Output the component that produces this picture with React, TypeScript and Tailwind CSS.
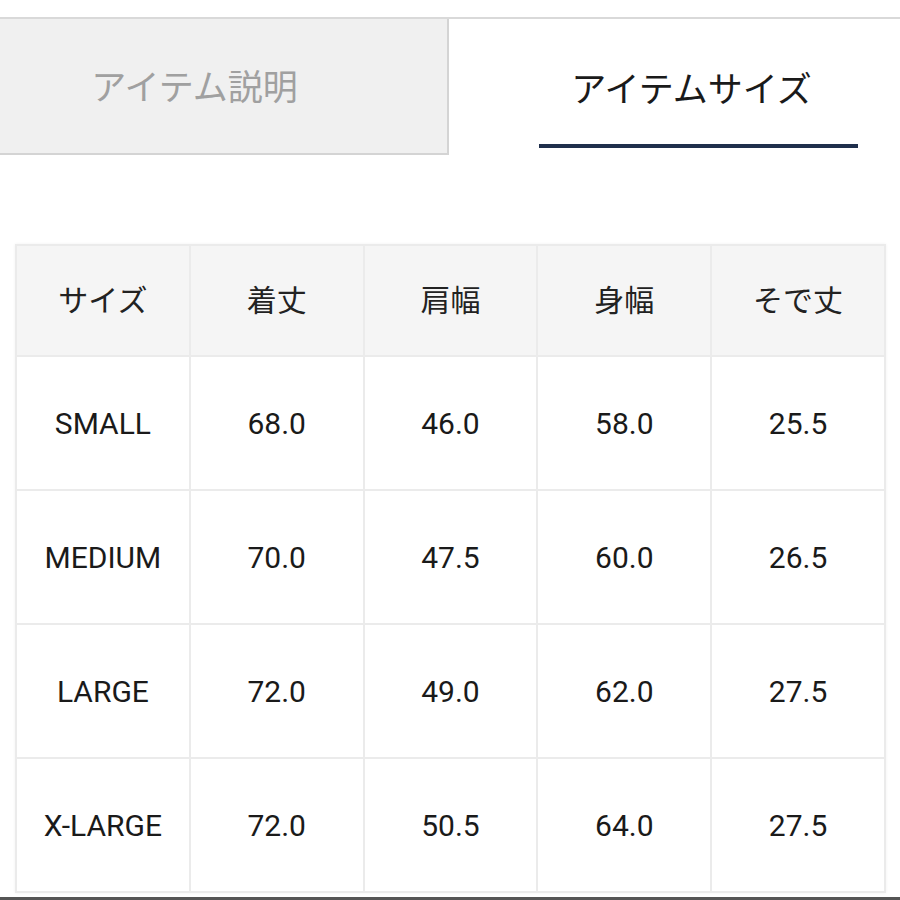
import React from 'react';

// Size chart rows
const sizeRows = [
  { size: 'SMALL', length: '68.0', shoulder: '46.0', width: '58.0', sleeve: '25.5' },
  { size: 'MEDIUM', length: '70.0', shoulder: '47.5', width: '60.0', sleeve: '26.5' },
  { size: 'LARGE', length: '72.0', shoulder: '49.0', width: '62.0', sleeve: '27.5' },
  { size: 'X-LARGE', length: '72.0', shoulder: '50.5', width: '64.0', sleeve: '27.5' },
];

const headers = ['サイズ', '着丈', '肩幅', '身幅', 'そで丈'];

const App: React.FC = () => {
  return (
    <div
      className="w-[900px] h-[900px] bg-white flex flex-col overflow-hidden"
      style={{ fontFamily: 'Roboto, "Noto Sans CJK JP", sans-serif' }}
    >
      <div className="h-[17px]" />
      <div className="h-[2px] bg-[#d9d9d9]" />

      {/* Tabs */}
      <div className="flex h-[136px]">
        <div className="w-[449px] bg-[#f0f0f0] border-r-2 border-b-2 border-[#d4d4d4] flex items-center justify-center pr-[58px] pt-[6px]">
          <span className="text-[35px] text-[#a0a0a0]">アイテム説明</span>
        </div>
        <div className="flex-1 flex flex-col">
          <div className="flex-1 flex items-end justify-center pl-[34px] pb-[27px]">
            <span className="text-[35px] text-[#1a1a1a]">アイテムサイズ</span>
          </div>
          <div className="h-[4px] ml-[90px] mr-[42px] mb-[7px] bg-[#1f2f4c]" />
        </div>
      </div>

      {/* Size table */}
      <div className="mt-[89px] ml-[15px]">
        <table className="w-[871px] table-fixed border-collapse border-2 border-[#ebebeb] shadow-[0_0_3px_rgba(0,0,0,0.06)]">
          <thead>
            <tr className="h-[111px] bg-[#f5f5f5]">
              {headers.map((h) => (
                <th key={h} className="border-2 border-[#ebebeb] text-[30px] font-normal text-[#222] text-center align-middle">
                  {h}
                </th>
              ))}
            </tr>
          </thead>
          <tbody>
            {sizeRows.map((row) => (
              <tr key={row.size} className="h-[134px]">
                {[row.size, row.length, row.shoulder, row.width, row.sleeve].map((v, i) => (
                  <td key={i} className="border-2 border-[#ebebeb] text-[30px] text-[#1a1a1a] text-center align-middle">
                    {v}
                  </td>
                ))}
              </tr>
            ))}
          </tbody>
        </table>
      </div>

      <div className="flex-1" />
      <div className="h-[3px] bg-[#555]" />
    </div>
  );
};

export default App;
